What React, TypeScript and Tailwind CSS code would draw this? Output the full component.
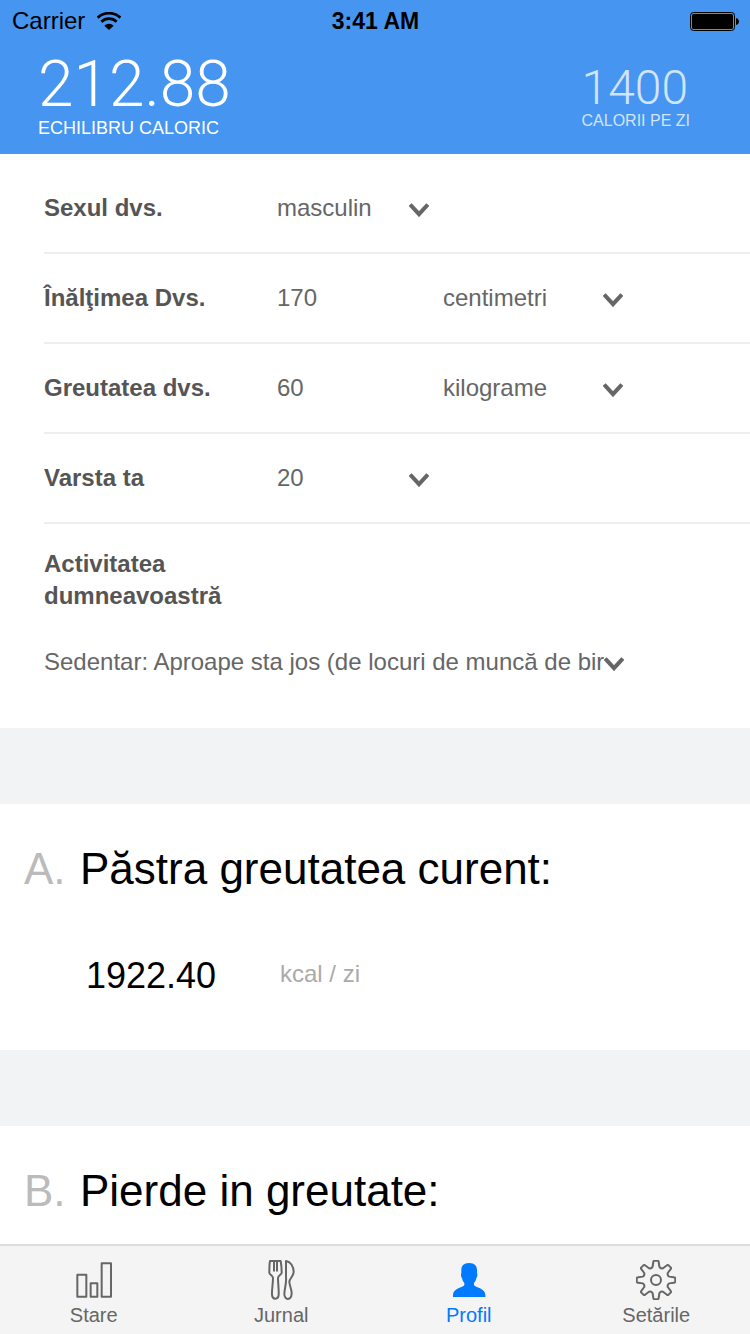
import type { ReactNode } from "react";

function WifiIcon() {
  return (
    <svg viewBox="0 0 72 54" className="h-[18px] w-6" fill="none" aria-hidden="true">
      <path d="M2 17C21 -1 51 -1 70 17" stroke="black" strokeWidth="8.5" />
      <path d="M13 29C26 17 46 17 59 29" stroke="black" strokeWidth="8.5" />
      <path d="M22 41C30 33 42 33 50 41L36 54Z" fill="black" />
    </svg>
  );
}

function BatteryIcon() {
  return (
    <svg viewBox="0 0 49 19" className="h-[19px] w-[49px]" fill="none" aria-hidden="true">
      <rect x="0.5" y="0.5" width="44" height="18" rx="3" stroke="black" />
      <rect x="2" y="2" width="41" height="15" rx="1.5" fill="black" />
      <path d="M46 6C50 7 50 12 46 13Z" fill="black" />
    </svg>
  );
}

function Chevron() {
  return (
    <svg
      viewBox="0 0 20 14"
      className="pointer-events-none absolute top-[11px] right-0 h-[14px] w-5"
      fill="none"
      aria-hidden="true"
    >
      <path d="M1.2 1.5L10 11.2L18.8 1.5" stroke="#666" strokeWidth="4" />
    </svg>
  );
}

function ChartIcon() {
  return (
    <svg viewBox="0 0 120 120" className="size-10" fill="none" stroke="currentColor" strokeWidth="6" strokeLinejoin="round" aria-hidden="true">
      <rect x="10" y="44" width="27" height="66" />
      <rect x="50" y="70" width="20" height="40" />
      <rect x="83" y="10" width="28" height="100" />
    </svg>
  );
}

function CutleryIcon() {
  return (
    <svg viewBox="0 0 120 120" className="size-10" fill="none" stroke="currentColor" strokeWidth="6" strokeLinejoin="round" strokeLinecap="round" aria-hidden="true">
      <path d="M27 3H59C61 14 62 24 62 38C62 44 51 47 51 54C51 72 54 90 53 104C52 120 34 120 33 104C32 90 36 72 36 54C36 47 25 44 25 38C25 24 25 14 27 3Z" />
      <path d="M39 4V32M48 4V32" />
      <path d="M75 3C88 5 98 18 98 36C98 49 84 57 85 66C86 78 92 88 92 100C91 122 70 122 70 102C71 82 77 68 75 52Z" />
    </svg>
  );
}

function PersonIcon() {
  return (
    <svg viewBox="0 0 120 120" className="size-10" fill="currentColor" aria-hidden="true">
      <path d="M60 9C77 9 84 18 84 30V39C86 44 85 51 82 54C81 61 78 66 75 69V75C79 83 108 84 109 104V111H12V104C13 84 42 83 46 75V69C43 66 40 61 39 54C36 51 35 44 37 39V30C37 18 44 9 60 9Z" />
    </svg>
  );
}

function polar(radius: number, angle: number) {
  return `${(60 + radius * Math.cos(angle)).toFixed(2)} ${(60 + radius * Math.sin(angle)).toFixed(2)}`;
}

function gearOutline(teeth: number) {
  const step = (Math.PI * 2) / teeth;
  let d = `M${polar(41, -0.25)}`;
  for (let i = 0; i < teeth; i++) {
    const a = i * step;
    d += `L${polar(54, a - 0.15)}Q${polar(58, a - 0.14)} ${polar(58, a - 0.09)}`;
    d += `L${polar(58, a + 0.09)}Q${polar(58, a + 0.14)} ${polar(54, a + 0.15)}`;
    d += `L${polar(41, a + 0.25)}Q${polar(36, a + step / 2)} ${polar(41, a + step - 0.25)}`;
  }
  return d + "Z";
}

function GearIcon() {
  return (
    <svg viewBox="0 0 120 120" className="size-10" fill="none" stroke="currentColor" strokeWidth="6" strokeLinejoin="round" aria-hidden="true">
      <path d={gearOutline(8)} />
      <circle cx="60" cy="60" r="15" />
    </svg>
  );
}

function Select({ id, label, width, options }: { id: string; label?: string; width: string; options: string[] }) {
  return (
    <div className={`relative ${width}`}>
      <select id={id} aria-label={label} className="block h-8 w-full appearance-none overflow-hidden pr-5 text-2xl leading-8 text-[#666]">
        {options.map((option) => (
          <option key={option}>{option}</option>
        ))}
      </select>
      <Chevron />
    </div>
  );
}

function Row({ id, label, children }: { id: string; label: string; children: ReactNode }) {
  return (
    <div className="ml-11 flex h-[90px] items-center border-b-2 border-[#eee]">
      <label htmlFor={id} className="w-[233px] shrink-0 text-2xl font-bold text-[#555]">
        {label}
      </label>
      {children}
    </div>
  );
}

function NumberField({ id, value }: { id: string; value: string }) {
  return <input id={id} type="text" inputMode="numeric" defaultValue={value} className="h-8 w-[166px] text-2xl text-[#666]" />;
}

function PlanHeading({ letter, children }: { letter: string; children: ReactNode }) {
  return (
    <h2 className="flex text-[44px] leading-[52px] text-black">
      <span className="w-14 shrink-0 text-[#bbb]">{letter}</span>
      <span>{children}</span>
    </h2>
  );
}

function Tab({ label, active, children }: { label: string; active?: boolean; children: ReactNode }) {
  return (
    <a
      href="#"
      aria-current={active ? "page" : undefined}
      className={`flex flex-1 flex-col items-center pt-[14px] pb-1 text-xl leading-[30px] ${active ? "text-[#007aff]" : "text-[#666]"}`}
    >
      {children}
      <span>{label}</span>
    </a>
  );
}

export default function App() {
  return (
    <div className="flex min-h-screen flex-col bg-white font-['Liberation_Sans',Arial,sans-serif]">
      <header className="bg-[#4595f1]">
        <div className="grid h-[42px] grid-cols-3 items-center pr-[11px] pl-3 text-2xl text-black">
          <div className="flex items-center gap-3">
            <span>Carrier</span>
            <WifiIcon />
          </div>
          <span className="text-center text-[23px] font-bold">3:41 AM</span>
          <div className="flex justify-end">
            <BatteryIcon />
          </div>
        </div>
        <div className="flex items-end justify-between pt-[11px] pr-[60px] pb-[15px] pl-[38px] text-white">
          <div>
            <p className="font-[Roboto,sans-serif] text-[64px] leading-[64px] font-light">212.88</p>
            <p className="text-lg leading-[22px]">ECHILIBRU CALORIC</p>
          </div>
          <div className="pb-[9px] opacity-75">
            <p className="font-[Roboto,sans-serif] text-5xl leading-[48px] font-light">1400</p>
            <p className="text-base leading-[18px]">CALORII PE ZI</p>
          </div>
        </div>
      </header>

      <main className="flex-1">
        <form className="pt-[10px]">
          <Row id="sex" label="Sexul dvs.">
            <Select id="sex" width="w-[152px]" options={["masculin", "feminin"]} />
          </Row>
          <Row id="height" label="Înălţimea Dvs.">
            <NumberField id="height" value="170" />
            <Select id="height-unit" label="Unitate înălţime" width="w-[180px]" options={["centimetri"]} />
          </Row>
          <Row id="weight" label="Greutatea dvs.">
            <NumberField id="weight" value="60" />
            <Select id="weight-unit" label="Unitate greutate" width="w-[180px]" options={["kilograme"]} />
          </Row>
          <Row id="age" label="Varsta ta">
            <Select id="age" width="w-[152px]" options={["20", "21", "22"]} />
          </Row>
          <div className="ml-11 flex flex-col gap-[34px] pt-6 pb-[50px]">
            <label htmlFor="activity" className="w-[233px] text-2xl leading-8 font-bold text-[#555]">
              Activitatea dumneavoastră
            </label>
            <Select
              id="activity"
              width="w-[580px]"
              options={["Sedentar: Aproape sta jos (de locuri de muncă de birou)"]}
            />
          </div>
        </form>

        <section className="border-t-[76px] border-[#f2f3f5] px-6 pt-[39px] pb-[45px]">
          <PlanHeading letter="A.">Păstra greutatea curent:</PlanHeading>
          <div className="mt-[52px] flex items-start pl-[62px]">
            <span className="w-[194px] text-4xl leading-[58px] text-black">1922.40</span>
            <span className="text-2xl leading-[54px] text-[#aaa]">kcal / zi</span>
          </div>
        </section>

        <section className="border-t-[76px] border-[#f2f3f5] px-6 pt-[39px] pb-[27px]">
          <PlanHeading letter="B.">Pierde in greutate:</PlanHeading>
        </section>
      </main>

      <nav className="sticky bottom-0 flex border-t-2 border-[#ddd] bg-[#f4f4f4]">
        <Tab label="Stare">
          <ChartIcon />
        </Tab>
        <Tab label="Jurnal">
          <CutleryIcon />
        </Tab>
        <Tab label="Profil" active>
          <PersonIcon />
        </Tab>
        <Tab label="Setările">
          <GearIcon />
        </Tab>
      </nav>
    </div>
  );
}
